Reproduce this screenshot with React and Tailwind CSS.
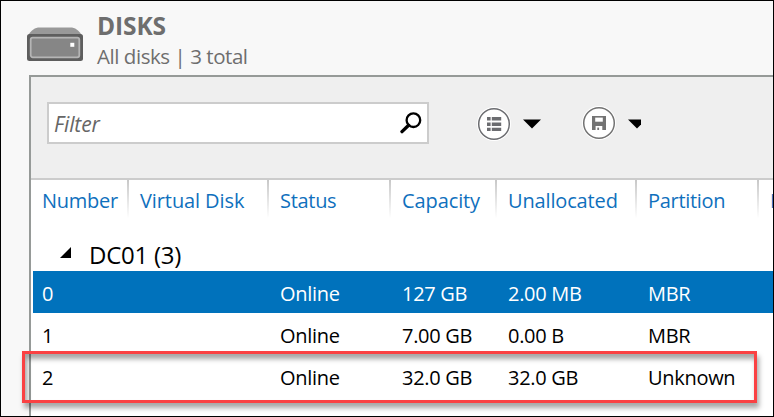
const COLUMNS = [
  { key: 'number', label: 'Number', width: 'w-[98px]', tracking: 'tracking-[-0.25px]' },
  { key: 'virtual', label: 'Virtual Disk', width: 'w-[140px]', tracking: 'tracking-[-0.1px]' },
  { key: 'status', label: 'Status', width: 'w-[122px]', tracking: 'tracking-[-0.3px]' },
  { key: 'capacity', label: 'Capacity', width: 'w-[106px]', tracking: 'tracking-[-0.1px]' },
  { key: 'unallocated', label: 'Unallocated', width: 'w-[140px]', tracking: 'tracking-[-0.15px]' },
  { key: 'partition', label: 'Partition', width: 'w-[122px]', tracking: 'tracking-[-0.3px]' },
];

const DISKS = [
  { number: '0', virtual: '', status: 'Online', capacity: '127 GB', unallocated: '2.00 MB', partition: 'MBR', selected: true },
  { number: '1', virtual: '', status: 'Online', capacity: '7.00 GB', unallocated: '0.00 B', partition: 'MBR' },
  { number: '2', virtual: '', status: 'Online', capacity: '32.0 GB', unallocated: '32.0 GB', partition: 'Unknown' },
];

function DiskIcon() {
  return (
    <svg className="block shrink-0" width="56" height="35" viewBox="0 0 56 35">
      <path d="M1 9 Q4 2 11 0.5 H45 Q52 2 55 9 Z" fill="#999" />
      <rect x="0" y="7" width="56" height="27" rx="2.5" fill="#5e5e5e" />
      <rect x="3.7" y="10.7" width="48.6" height="19.6" rx="2" fill="#868686" stroke="#b5b5b5" strokeWidth="1.8" />
      <rect x="43.3" y="15.8" width="4" height="4" fill="#fff" />
    </svg>
  );
}

function SearchIcon() {
  return (
    <svg className="block" width="22" height="22" viewBox="0 0 22 22" fill="none" stroke="#000">
      <circle cx="13.4" cy="8.2" r="6.8" strokeWidth="2.3" />
      <path d="M8.6 13.2 L2 19.6" strokeWidth="3.4" strokeLinecap="round" />
    </svg>
  );
}

function ListIcon() {
  return (
    <svg className="block" width="34" height="34" viewBox="0 0 34 34">
      <circle cx="17" cy="17" r="17" fill="#fff" />
      <circle cx="17" cy="17" r="15.3" fill="#fff" stroke="#6b6c70" strokeWidth="1.5" />
      <g fill="#6b6c70">
        <path d="M10 9.9h3.6v3.7H10zM14.8 9.9h9.4v3.7h-9.4z" />
        <path d="M10 15.4h3.6v3.5H10zM14.8 15.4h9.4v3.5h-9.4z" />
        <path d="M10 20.7h3.6v3.4H10zM14.8 20.7h9.4v3.4h-9.4z" />
      </g>
    </svg>
  );
}

function SaveIcon() {
  return (
    <svg className="block" width="34" height="34" viewBox="0 0 34 34">
      <circle cx="17" cy="17" r="17" fill="#fff" />
      <circle cx="17" cy="17" r="15.3" fill="#fff" stroke="#737373" strokeWidth="1.5" />
      <path d="M10 10h14v14H10z" fill="#737373" />
      <path d="M13.2 11.6h7.6v4.1h-7.6z" fill="#fff" />
      <path d="M13.6 20h6.7v4h-6.7z" fill="#fff" />
      <path d="M15.3 21.6h1.8v2.4h-1.8z" fill="#737373" />
    </svg>
  );
}

export default function App() {
  return (
    <div className="relative flex h-[417px] w-[774px] flex-col overflow-hidden border border-black bg-[#f8f8f8] font-['Open_Sans','Noto_Sans',sans-serif] text-black">
      <header className="flex h-[74px] shrink-0 pl-[26px]">
        <div className="pt-[26px]"><DiskIcon /></div>
        <div className="flex flex-col pl-[14px] pt-[10px] text-[#6e6e6e]">
          <h1 className="text-[24.5px] leading-[30px] font-bold tracking-[-0.1px] whitespace-nowrap">DISKS</h1>
          <p className="text-[20.5px] leading-[30px] tracking-[-0.45px] whitespace-nowrap">All disks | 3 total</p>
        </div>
      </header>

      <main className="ml-7 flex grow flex-col border-t-2 border-l-2 border-[#969a98] bg-white">
        <div className="flex h-[103px] shrink-0 items-start border-b-2 border-[#ccc] bg-[#efefef] pt-[25px] pl-4">
          <div className="flex h-[42px] w-[382px] items-center justify-between border-2 border-[#ccc] bg-white pr-[5px] pl-[5px]">
            <span className="pt-1 text-[21px] tracking-[-0.1px] text-[#666] italic">Filter</span>
            <SearchIcon />
          </div>
          <div className="flex items-center pt-[5px] pl-[48px]">
            <ListIcon />
            <svg className="ml-[12px] block" width="18" height="10" viewBox="0 0 18 10"><path d="M0 0.5h18L9 9.5z" /></svg>
          </div>
          <div className="flex items-center pt-1 pl-[41px]">
            <SaveIcon />
            <svg className="mt-0.5 ml-[12px] block" width="13" height="10" viewBox="0 0 13 10"><path d="M0 0.5h13v5L9 9.5z" /></svg>
          </div>
        </div>

        <div className="flex h-[60px] shrink-0 overflow-hidden pl-[11px] text-[20px] leading-[42px] whitespace-nowrap text-[#0f70bd]">
          {COLUMNS.map((c) => (
            <div key={c.key} className={`flex shrink-0 justify-between ${c.width}`}>
              <span className={c.tracking}>{c.label}</span>
              <span className="mr-[11px] h-[38px] w-[2px] shrink-0 bg-linear-to-b from-[#c8c8c8] to-white" />
            </div>
          ))}
          <span>P</span>
        </div>

        <div className="flex h-[31px] shrink-0 items-center pl-[29px]">
          <svg className="mb-1.5 block" width="11" height="11" viewBox="0 0 11 11"><path d="M11 0v11H0z" /></svg>
          <span className="pb-0.5 pl-[18px] text-[24px] leading-[29px] tracking-[-0.25px]">DC01 (3)</span>
        </div>

        {DISKS.map((d) => (
          <div key={d.number} className={`ml-0.5 flex h-[42px] shrink-0 items-center pt-[3px] pl-[9px] text-[20px] whitespace-nowrap ${d.selected ? 'bg-[#0072bc] text-white' : ''}`}>
            {COLUMNS.map((c) => (
              <div key={c.key} className={`shrink-0 ${c.width}`}><span className="tracking-[-0.3px]">{d[c.key]}</span></div>
            ))}
          </div>
        ))}
      </main>

      <div className="absolute top-[350px] left-[21px] h-[52px] w-[735px] border-3 border-[#fa4143] shadow-[2px_5px_5px_rgba(0,0,0,0.35),inset_2px_5px_5px_rgba(0,0,0,0.35)]" />
    </div>
  );
}
